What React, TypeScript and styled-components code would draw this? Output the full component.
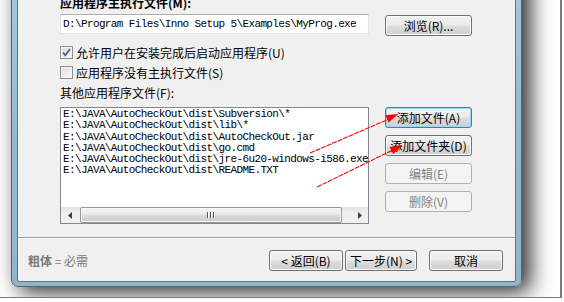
import React from "react";
import styled, { createGlobalStyle, css } from "styled-components";

const GlobalStyle = createGlobalStyle`
  html, body { margin: 0; padding: 0; background: #fff; }
  body {
    width: 564px; height: 302px; overflow: hidden;
    font-family: "Noto Sans CJK SC", "Liberation Sans", sans-serif;
    font-size: 12px; color: #000;
  }
`;

const Page = styled.div`
  position: relative;
  width: 564px;
  height: 302px;
  background: #fff;
  overflow: hidden;
`;

const Frame = styled.div`
  box-sizing: border-box;
  width: 562px;
  height: 298px;
  border-right: 2px solid #7b7b7b;
  border-bottom: 1px solid #7b7b7b;
  overflow: hidden;
  background: #fff;
  padding-left: 11px;
`;

const Window = styled.div`
  box-sizing: border-box;
  width: 511px;
  height: 320px;
  margin-top: -33px;
  border: 1px solid #5b6068;
  border-radius: 0 0 7px 7px;
  padding: 5px 5px 4px 5px;
  background: linear-gradient(to bottom, #a9c8dc, #93b8cf 60%, #8fb4cc);
  box-shadow: 8px 5px 22px rgba(0, 0, 0, 0.85);
  display: flex;
`;

const Client = styled.div`
  flex: 1;
  display: flex;
  flex-direction: column;
  border: 1px solid #66727e;
  border-radius: 0 0 2px 2px;
  background: #f0f0f0;
`;

const Main = styled.div`
  display: flex;
  flex-direction: column;
  padding: 22px 0 13px 42px;
`;

const FieldLabel = styled.div<{ $bold?: boolean; $top?: number }>`
  height: 14px;
  line-height: 14px;
  margin-top: ${(p) => p.$top ?? 0}px;
  font-weight: ${(p) => (p.$bold ? 700 : 400)};
  white-space: nowrap;
`;

const PathRow = styled.div`
  display: flex;
  align-items: flex-start;
  gap: 16px;
  margin-top: 4px;
  height: 22px;
`;

const mono = css`
  font-family: "Liberation Mono", "DejaVu Sans Mono", monospace;
  font-size: 11px;
  letter-spacing: -0.62px;
`;

const PathInput = styled.div`
  box-sizing: border-box;
  width: 309px;
  height: 20px;
  border: 1px solid #e2e3ea;
  border-top-color: #abadb3;
  background: #fff;
  padding-left: 2px;
  line-height: 18px;
  white-space: nowrap;
  overflow: hidden;
  ${mono}
`;

type BtnKind = "normal" | "focus" | "disabled";

const Button = styled.div<{ $w?: number; $kind?: BtnKind; $ml?: number; $mt?: number }>`
  box-sizing: border-box;
  width: ${(p) => p.$w ?? 87}px;
  height: 21px;
  margin-left: ${(p) => p.$ml ?? 0}px;
  margin-top: ${(p) => p.$mt ?? 0}px;
  border: 1px solid #707070;
  border-radius: 3px;
  background: linear-gradient(to bottom, #f2f2f2 0%, #ebebeb 48%, #dddddd 52%, #cfcfcf 100%);
  box-shadow: inset 0 0 0 1px #fbfbfb;
  display: flex;
  align-items: center;
  justify-content: center;
  line-height: 19px;
  white-space: nowrap;
  flex-shrink: 0;
  ${(p) =>
    p.$kind === "focus" &&
    css`
      border-color: #3c7fb1;
      box-shadow: inset 0 0 0 1px #8fdcf8;
    `}
  ${(p) =>
    p.$kind === "disabled" &&
    css`
      border-color: #adb2b5;
      background: #f4f4f4;
      box-shadow: none;
      color: #838383;
    `}
`;

const CheckRow = styled.div<{ $top: number }>`
  display: flex;
  align-items: center;
  gap: 3px;
  height: 13px;
  margin-top: ${(p) => p.$top}px;
  line-height: 13px;
  white-space: nowrap;
`;

const Box = styled.div`
  box-sizing: border-box;
  width: 13px;
  height: 13px;
  border: 1px solid #8e8f8f;
  background: linear-gradient(135deg, #dcdcdc, #fbfbfb);
  box-shadow: inset 0 0 0 1px #f4f4f4;
  display: flex;
  align-items: center;
  justify-content: center;
  flex-shrink: 0;
`;

const CheckBox = ({ checked }: { checked?: boolean }) => (
  <Box>
    {checked && (
      <svg width="11" height="11" viewBox="0 0 11 11">
        <path d="M2 5.5 L4.3 8.2 L9 2" stroke="#4a5f97" strokeWidth="1.8" fill="none" />
      </svg>
    )}
  </Box>
);

const ListRow = styled.div`
  display: flex;
  align-items: flex-start;
  gap: 16px;
  margin-top: 7px;
`;

const ListBox = styled.div`
  box-sizing: border-box;
  width: 309px;
  height: 117px;
  border: 1px solid #828790;
  background: #fff;
  display: flex;
  flex-direction: column;
`;

const ListItems = styled.div`
  flex: 1;
  padding: 1px 0 0 2px;
  overflow: hidden;
  white-space: nowrap;
  ${mono}
`;

const ListItem = styled.div`
  height: 11.3px;
  line-height: 11.3px;
`;

const HScroll = styled.div`
  display: flex;
  height: 16px;
  background: linear-gradient(to bottom, #e3e3e3, #efefef 40%, #f0f0f0);
`;

const ScrollArrow = styled.div`
  width: 17px;
  display: flex;
  align-items: center;
  justify-content: center;
`;

const Track = styled.div`
  flex: 1;
  display: flex;
  padding: 0 0 0 2px;
`;

const Thumb = styled.div`
  box-sizing: border-box;
  width: 262px;
  border: 1px solid #979797;
  border-radius: 2px;
  background: linear-gradient(to bottom, #f4f4f4 0%, #e9e9e9 45%, #d9d9d9 55%, #cdcdcd 100%);
  box-shadow: inset 0 0 0 1px #f8f8f8;
  display: flex;
  align-items: center;
  justify-content: center;
  gap: 1px;
`;

const Grip = styled.div`
  width: 1px;
  height: 6px;
  background: #555;
  box-shadow: 1px 0 0 #fff;
  margin-right: 1px;
`;

const SideButtons = styled.div`
  display: flex;
  flex-direction: column;
  gap: 7px;
`;

const Separator = styled.div`
  height: 1px;
  background: #a0a0a0;
  border-bottom: 1px solid #fff;
`;

const Footer = styled.div`
  flex: 1;
  display: flex;
  align-items: flex-start;
  padding: 11px 12px 0 10px;
`;

const Hint = styled.div`
  margin-top: 4px;
  line-height: 14px;
  color: #7a7a7a;
  white-space: nowrap;
  flex: 1;
  b { font-weight: 700; }
`;

const ArrowsOverlay = styled.svg`
  position: absolute;
  left: 0;
  top: 0;
  width: 564px;
  height: 302px;
  pointer-events: none;
`;

const items = [
  "E:\\JAVA\\AutoCheckOut\\dist\\Subversion\\*",
  "E:\\JAVA\\AutoCheckOut\\dist\\lib\\*",
  "E:\\JAVA\\AutoCheckOut\\dist\\AutoCheckOut.jar",
  "E:\\JAVA\\AutoCheckOut\\dist\\go.cmd",
  "E:\\JAVA\\AutoCheckOut\\dist\\jre-6u20-windows-i586.exe",
  "E:\\JAVA\\AutoCheckOut\\dist\\README.TXT",
];

export default function App() {
  return (
    <Page>
      <GlobalStyle />
      <Frame>
        <Window>
          <Client>
            <Main>
              <FieldLabel $bold>应用程序主执行文件(M):</FieldLabel>
              <PathRow>
                <PathInput>D:\Program Files\Inno Setup 5\Examples\MyProg.exe</PathInput>
                <Button $mt={1}>浏览(R)...</Button>
              </PathRow>
              <CheckRow $top={10}>
                <CheckBox checked />
                <span>允许用户在安装完成后启动应用程序(U)</span>
              </CheckRow>
              <CheckRow $top={7}>
                <CheckBox />
                <span>应用程序没有主执行文件(S)</span>
              </CheckRow>
              <FieldLabel $top={7}>其他应用程序文件(F):</FieldLabel>
              <ListRow>
                <ListBox>
                  <ListItems>
                    {items.map((t) => (
                      <ListItem key={t}>{t}</ListItem>
                    ))}
                  </ListItems>
                  <HScroll>
                    <ScrollArrow>
                      <svg width="4" height="7" viewBox="0 0 4 7">
                        <path d="M4 0 L0 3.5 L4 7 Z" fill="#3d3d3d" />
                      </svg>
                    </ScrollArrow>
                    <Track>
                      <Thumb>
                        <Grip />
                        <Grip />
                        <Grip />
                      </Thumb>
                    </Track>
                    <ScrollArrow>
                      <svg width="4" height="7" viewBox="0 0 4 7">
                        <path d="M0 0 L4 3.5 L0 7 Z" fill="#3d3d3d" />
                      </svg>
                    </ScrollArrow>
                  </HScroll>
                </ListBox>
                <SideButtons>
                  <Button $kind="focus">添加文件(A)</Button>
                  <Button>添加文件夹(D)</Button>
                  <Button $kind="disabled">编辑(E)</Button>
                  <Button $kind="disabled">删除(V)</Button>
                </SideButtons>
              </ListRow>
            </Main>
            <Separator />
            <Footer>
              <Hint>
                <b>粗体</b> = 必需
              </Hint>
              <Button $w={74}>&lt; 返回(B)</Button>
              <Button $w={72} $ml={2}>下一步(N) &gt;</Button>
              <Button $w={74} $ml={12}>取消</Button>
            </Footer>
          </Client>
        </Window>
      </Frame>
      <ArrowsOverlay viewBox="0 0 564 302">
        <line x1="310" y1="153" x2="389" y2="119" stroke="#ff0000" strokeWidth="1.1" strokeDasharray="5 1" />
        <polygon points="398.5,114 388.6,122.6 385.4,115.2" fill="#ff0000" />
        <line x1="317" y1="187" x2="393" y2="150" stroke="#ff0000" strokeWidth="1.1" strokeDasharray="5 1" />
        <polygon points="402.5,145 393.2,154 389.6,147" fill="#ff0000" />
      </ArrowsOverlay>
    </Page>
  );
}
